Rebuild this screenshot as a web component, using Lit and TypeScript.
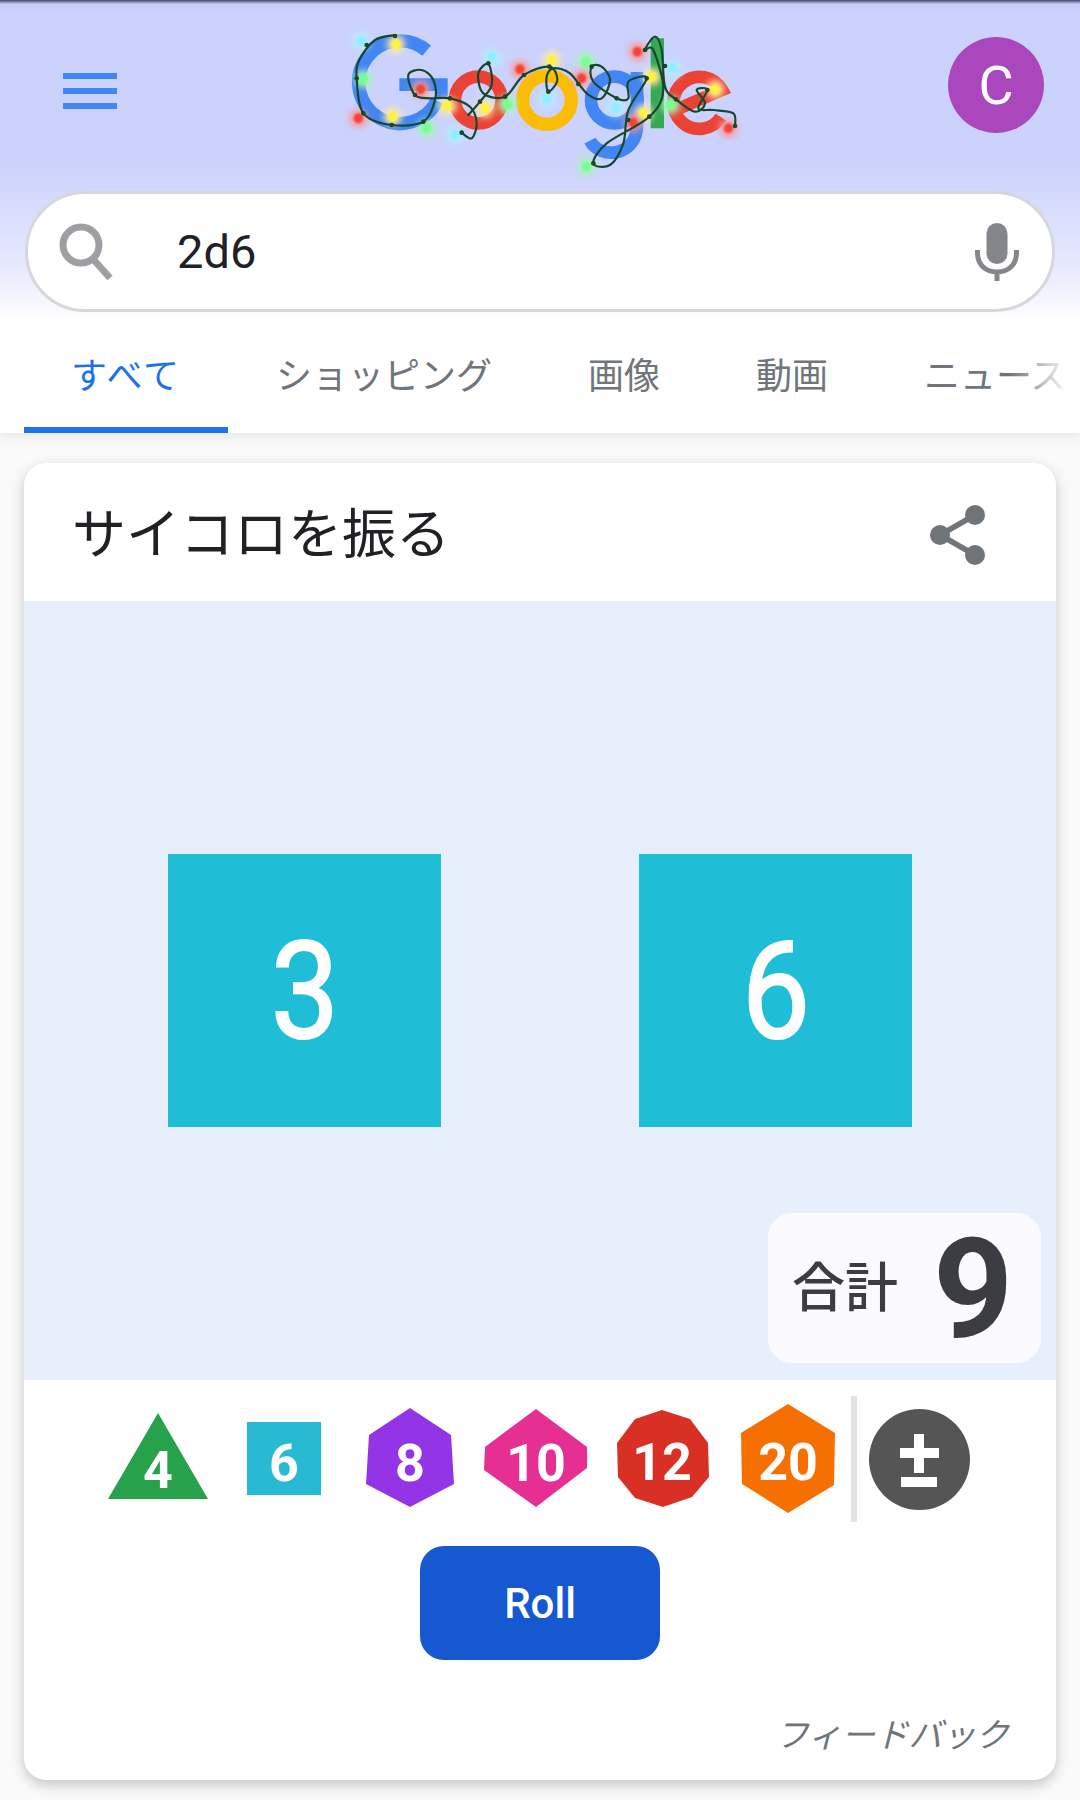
import { LitElement, html, css, svg } from "lit";
import { customElement } from "lit/decorators.js";

type Pt = [number, number];

function smooth(p: Pt[]): string {
  let d = `M${p[0][0]} ${p[0][1]}`;
  for (let i = 0; i < p.length - 1; i++) {
    const a = p[Math.max(i - 1, 0)], b = p[i], c = p[i + 1], e = p[Math.min(i + 2, p.length - 1)];
    const c1x = b[0] + (c[0] - a[0]) / 6, c1y = b[1] + (c[1] - a[1]) / 6;
    const c2x = c[0] - (e[0] - b[0]) / 6, c2y = c[1] - (e[1] - b[1]) / 6;
    d += ` C${c1x.toFixed(1)} ${c1y.toFixed(1)} ${c2x.toFixed(1)} ${c2y.toFixed(1)} ${c[0]} ${c[1]}`;
  }
  return d;
}

const STRING_B: Pt[] = [[285,75],[225,90],[178,150],[170,205],[190,310],[275,345],[370,335],[405,270],[400,210],[365,180],[325,195],[345,255],[390,265],[450,265],[510,290],[530,340],[515,385],[485,368]];
const STRING_C: Pt[] = [[505,315],[540,275],[575,225],[565,162],[535,190],[550,250],[615,260],[672,195],[748,170],[772,210],[745,245],[740,200],[760,175],[810,190],[860,250],[905,265],[930,210],[905,170],[875,170],[880,215],[950,265],[985,265],[985,215],[1040,205],[985,300],[970,400],[930,465],[880,460],[920,400],[1048,320],[1090,240],[1060,120],[1035,120],[1065,80],[1085,120],[1095,230],[1128,268],[1185,305],[1215,280],[1190,240],[1222,240],[1195,295],[1240,300],[1300,310],[1305,348]];

const Y = ["#fff33b", "#ffe9a6"], R = ["#f44336", "#fb9a9a"], G = ["#74ff8e", "#a6f5b8"], C = ["#8ceeff", "#b6ecff"];
const LAMPS: [number, number, string[], number, number][] = [
  [183,93,C,200,105],[288,103,Y,285,78],[190,207,G,170,205],[175,325,R,190,310],[278,320,Y,275,345],[380,355,G,370,335],
  [362,238,R,345,255],[442,288,Y,450,265],[465,375,C,485,368],[555,295,Y,540,275],[622,283,G,615,260],[575,140,C,565,160],
  [660,178,R,672,195],[755,150,Y,748,170],[740,268,C,745,245],[858,155,G,875,170],[845,205,R,835,222],[948,293,C,950,265],
  [1055,200,Y,1040,205],[1030,310,Y,1048,320],[1000,338,R,985,330],[1012,125,R,1035,120],[1117,175,C,1095,168],
  [1112,285,G,1128,268],[1245,238,Y,1222,240],[1285,355,R,1305,348],[860,470,G,880,460],
];

const DICE: { pts: string; fill: string; label: string; x: number; y: number }[] = [
  { pts: "63,17 113,103 13,103", fill: "#27a24a", label: "4", x: 63, y: 92 },
  { pts: "26,26 100,26 100,99 26,99", fill: "#29b9d3", label: "6", x: 63, y: 85 },
  { pts: "63,12 104,39 107,88 63,111 19,88 22,39", fill: "#9334e6", label: "8", x: 63, y: 85 },
  { pts: "63,13 114,51 114,72 63,111 11,74 12,51", fill: "#e52f92", label: "10", x: 63, y: 85 },
  { pts: "63,14 91,23 109,47 110,81 93,101 64,111 36,102 19,81 18,47 36,23", fill: "#d93025", label: "12", x: 63, y: 84 },
  { pts: "63,8 110,37 109,89 63,117 17,88 16,37", fill: "#f57000", label: "20", x: 63, y: 84 },
];

@customElement("app-root")
export class AppRoot extends LitElement {
  static styles = css`
    :host { display: block; width: 1080px; height: 1800px; overflow: hidden; background: #fafafa; font-family: "Noto Sans CJK JP", "Noto Sans", sans-serif; }
    .top { position: relative; z-index: 1; background: linear-gradient(#3a4566 0, #c4cbf6 4px, #cbd2fd 14px, #cbd2fd 160px, #e6e9fd 265px, #fff 322px); box-shadow: 0 3px 12px rgba(0,0,0,.09); }
    .head { display: flex; align-items: flex-start; height: 191px; padding-left: 63px; }
    .burger { display: flex; flex-direction: column; gap: 9px; width: 54px; margin-top: 73px; }
    .burger span { height: 6px; background: #4285f4; }
    .logo { display: block; width: 480px; height: 180px; margin: 10px 0 0 183px; }
    .avatar { width: 96px; height: 96px; margin: 37px 0 0 168px; border-radius: 50%; background: #ab47bc; color: #fff; font: 400 54px Roboto, sans-serif; display: flex; align-items: center; justify-content: center; }
    .search { box-sizing: border-box; display: flex; align-items: center; width: 1030px; height: 121px; margin: 0 0 8px 25px; background: #fff; border: 3px solid #d6d7db; border-radius: 60px; }
    .search .glass { display: block; width: 60px; height: 60px; margin-left: 28px; }
    .q { margin-left: 61px; flex: 1; font: 400 47px Roboto, sans-serif; color: #202124; }
    .search .mic { display: block; width: 44px; height: 58px; margin-right: 33px; }
    .tabs { position: relative; display: flex; height: 113px; padding-left: 24px; overflow: hidden; }
    .tab { box-sizing: border-box; flex: none; height: 113px; padding: 28px 48px 0; font-size: 36px; line-height: 50px; color: #70757a; white-space: nowrap; }
    .tab.on { width: 204px; padding: 28px 0 0; text-align: center; letter-spacing: 2px; color: #1a73e8; border-bottom: 6px solid #1a73e8; }
    .fade { position: absolute; top: 0; right: 0; width: 70px; height: 113px; background: linear-gradient(90deg, rgba(255,255,255,0), #fff 85%); }
    .card { box-sizing: border-box; width: 1032px; height: 1317px; margin: 30px 0 0 24px; background: #fff; border-radius: 22px; overflow: hidden; display: flex; flex-direction: column; box-shadow: 0 5px 14px rgba(0,0,0,.22); }
    .title { flex: none; height: 138px; display: flex; align-items: center; justify-content: space-between; padding: 0 71px 0 48px; }
    .title h1 { margin: -2px 0 0; font-size: 54px; font-weight: 400; color: #202124; line-height: 70px; }
    .share { display: block; width: 55px; height: 60px; margin-top: 6px; color: #70757a; }
    .stage { position: relative; flex: none; height: 779px; background: #e8effc; display: flex; align-items: center; justify-content: center; gap: 198px; }
    .die { width: 273px; height: 273px; background: #1fbed6; color: #fff; font: 400 135px/276px Roboto, sans-serif; text-align: center; filter: blur(.7px); -webkit-text-stroke: 2px #fff; }
    .die span { display: inline-block; transform: scaleX(.9); }
    .total { position: absolute; right: 15px; bottom: 17px; box-sizing: border-box; width: 273px; height: 150px; padding-left: 24px; background: #fbfbff; border-radius: 24px; display: flex; align-items: center; gap: 35px; color: #3c3c43; }
    .total .lab { font-size: 53px; font-weight: 500; line-height: 60px; margin-top: -9px; }
    .total .num { font: 700 140px/150px Roboto, sans-serif; margin-top: 2px; }
    .picker { flex: none; display: flex; align-items: center; height: 126px; margin-top: 16px; padding-left: 71px; }
    .dice { display: block; flex: none; width: 126px; height: 126px; }
    .dice text { font: 700 52px Roboto, sans-serif; fill: #fff; text-anchor: middle; }
    .sep { flex: none; width: 6px; height: 126px; background: #e3e3e3; }
    .pm { flex: none; display: block; width: 101px; height: 103px; margin-left: 12px; }
    .rollrow { display: flex; justify-content: center; margin-top: 24px; }
    .roll { width: 240px; height: 114px; border: 0; border-radius: 24px; background: #1558cf; color: #fff; font: 500 42px Roboto, sans-serif; padding: 0; }
    .fb { margin-top: 49px; padding-right: 47px; text-align: right; font-size: 33.5px; line-height: 48px; font-style: italic; color: #70757a; }
  `;

  private logo() {
    return html`<svg class="logo" viewBox="0 0 1440 540" role="img" aria-label="Google">
      <defs><filter id="b" x="-80%" y="-80%" width="260%" height="260%"><feGaussianBlur stdDeviation="9"></feGaussianBlur></filter>
      <filter id="s" x="-40%" y="-40%" width="180%" height="180%"><feGaussianBlur stdDeviation="3"></feGaussianBlur></filter></defs>
      <g fill="none" stroke-width="38">
        <path d="M380 122 A124 124 0 1 0 411 272" stroke="#4285f4" stroke-width="40"></path>
        <path d="M298 224 H424 V262" stroke="#4285f4" stroke-width="38"></path>
        <circle cx="535" cy="270" r="70" stroke="#ea4335"></circle>
        <circle cx="741" cy="270" r="73" stroke="#fbbc05" stroke-width="40"></circle>
        <circle cx="943" cy="270" r="70" stroke="#4285f4"></circle>
        <path d="M1011 186 V345 C1011 440 900 450 870 392" stroke="#4285f4"></path>
        <path d="M1072 85 V355" stroke="#34a853" stroke-width="40"></path>
        <path d="M1263 322 A78 78 0 1 1 1266 240 L1140 294" stroke="#ea4335"></path>
      </g>
      ${LAMPS.map(([x, y, c]) => svg`<circle cx=${x} cy=${y} r="28" fill=${c[1]} opacity=".9" filter="url(#b)"></circle>`)}
      ${LAMPS.map(([x, y, c]) => svg`<ellipse cx=${x} cy=${y} rx="14" ry="15" fill=${c[0]} filter="url(#s)"></ellipse>`)}
      <g fill="none" stroke="#17472c" stroke-width="6.5" stroke-linecap="round">
        ${[STRING_B, STRING_C].map((p) => svg`<path d=${smooth(p)}></path>`)}
      </g>
      ${LAMPS.map((l) => svg`<circle cx=${l[3]} cy=${l[4]} r="7" fill="#17472c"></circle>`)}
    </svg>`;
  }

  render() {
    return html`
      <div class="top">
        <div class="head">
          <div class="burger"><span></span><span></span><span></span></div>
          ${this.logo()}
          <div class="avatar">C</div>
        </div>
        <div class="search">
          <svg class="glass" viewBox="0 0 60 60" fill="none" stroke="#9e9fa3" stroke-width="7">
            <circle cx="25" cy="23" r="18"></circle><path d="M37 37 L54 56"></path>
          </svg>
          <div class="q">2d6</div>
          <svg class="mic" viewBox="0 0 44 58" fill="none" stroke="#85868c">
            <rect x="11.500" y="0" width="21" height="41" rx="10.500" fill="#85868c" stroke="none"></rect>
            <path d="M2.500 27 V30 C2.500 42 11 49 22 49 C33 49 41.500 42 41.500 30 V27" stroke-width="5"></path>
            <path d="M22 49 V58" stroke-width="5"></path>
          </svg>
        </div>
        <div class="tabs">
          <div class="tab on">すべて</div>
          <div class="tab">ショッピング</div>
          <div class="tab">画像</div>
          <div class="tab">動画</div>
          <div class="tab">ニュース</div>
          <div class="fade"></div>
        </div>
      </div>
      <div class="card">
        <div class="title">
          <h1>サイコロを振る</h1>
          <svg class="share" viewBox="0 0 55 60" fill="currentColor" stroke="currentColor">
            <path d="M45 10 L10 30 L45 50" fill="none" stroke-width="5.5"></path>
            <circle cx="45" cy="10" r="10" stroke="none"></circle>
            <circle cx="10" cy="30" r="10" stroke="none"></circle>
            <circle cx="45" cy="50" r="10" stroke="none"></circle>
          </svg>
        </div>
        <div class="stage">
          <div class="die"><span>3</span></div>
          <div class="die"><span>6</span></div>
          <div class="total"><span class="lab">合計</span><span class="num">9</span></div>
        </div>
        <div class="picker">
          ${DICE.map((d) => html`<svg class="dice" viewBox="0 0 126 126"><polygon points=${d.pts} fill=${d.fill}></polygon><text x=${d.x} y=${d.y}>${d.label}</text></svg>`)}
          <div class="sep"></div>
          <svg class="pm" viewBox="0 0 101 103">
            <circle cx="50.5" cy="51.5" r="50.5" fill="#555"></circle>
            <path d="M31 40 H70 V50 H31 Z M45 26 H55 V65 H45 Z M32 69 H68 V79 H32 Z" fill="#fff"></path>
          </svg>
        </div>
        <div class="rollrow"><button class="roll">Roll</button></div>
        <div class="fb">フィードバック</div>
      </div>
    `;
  }
}
